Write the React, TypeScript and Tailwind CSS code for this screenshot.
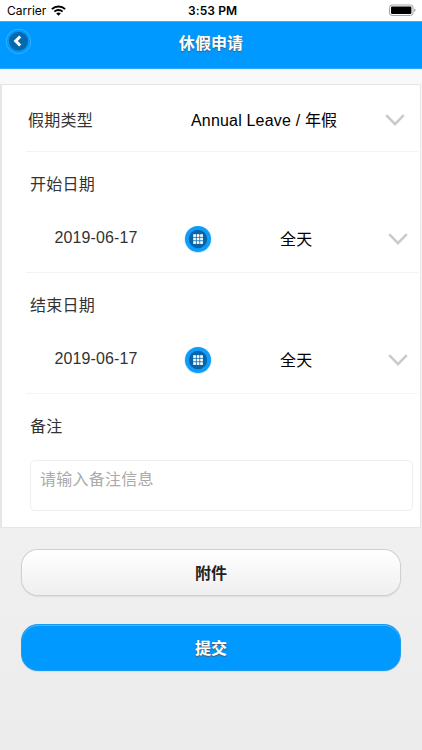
import { type FC } from "react";

interface DateSectionProps {
  label: string;
  date: string;
  period: string;
}

const StatusBar: FC = () => (
  <div className="relative flex h-[21px] items-center justify-between bg-white pr-[5px] pl-[7px] text-black">
    <div className="flex items-center gap-[5px]">
      <span className="font-[Inter,sans-serif] text-[12px] leading-[21px]">
        Carrier
      </span>
      <svg width="15" height="11" viewBox="0 0 15 11" fill="none">
        <path d="M0.9 4.1a9.4 9.4 0 0 1 13.2 0" stroke="#000" strokeWidth="2" />
        <path d="M3.4 6.6a5.9 5.9 0 0 1 8.2 0" stroke="#000" strokeWidth="1.9" />
        <path d="M7.5 10.8 5.2 8.5a3.3 3.3 0 0 1 4.6 0Z" fill="#000" />
      </svg>
    </div>
    <span className="absolute left-[188px] font-[Inter,sans-serif] text-[12px] leading-[21px] font-semibold tracking-[0.1px]">
      3:53 PM
    </span>
    <svg width="29" height="13" viewBox="0 0 29 13">
      <rect x="1.5" y="1" width="23.5" height="10.5" rx="2.5" fill="#fff" stroke="#a3a3a3" />
      <rect x="3" y="2.6" width="20.4" height="7.3" rx="0.8" fill="#000" />
      <path d="M26.3 4.6v3.4c1.6-.4 1.6-3 0-3.4Z" fill="#888" />
    </svg>
  </div>
);

const ChevronDown: FC = () => (
  <svg width="20" height="13" viewBox="0 0 20 13" fill="none">
    <path d="m1.2 1.2 8.8 8.9 8.8-8.9" stroke="#cacacd" strokeWidth="2.6" />
  </svg>
);

const CalendarIcon: FC = () => (
  <svg width="28" height="28" viewBox="0 0 28 28">
    <circle cx="14" cy="14.3" r="13.6" fill="#c3ebfc" />
    <circle cx="14" cy="14" r="13" fill="#109cf8" />
    <circle cx="14" cy="14" r="9.2" fill="#0664a8" />
    {[9.2, 12.7, 16.2].map((y) =>
      [9.2, 12.7, 16.2].map((x) => (
        <rect key={`${x}-${y}`} x={x} y={y} width="2.7" height="2.7" fill="#fff" />
      )),
    )}
  </svg>
);

const DateSection: FC<DateSectionProps> = (props) => {
  const { label, date, period } = props;
  return (
    <div className="mr-[2px] ml-6 h-[121px] border-b border-[#f3f3f3]">
      <div className="h-[66px] pl-1 leading-[66px] tracking-[0.25px] text-[#333]">
        {label}
      </div>
      <div className="flex h-[42px] items-center">
        <span className="w-[130px] pb-[2px] pl-[28.5px] tracking-[0.12px] whitespace-nowrap text-[#333]">
          {date}
        </span>
        <span className="ml-[28px]">
          <CalendarIcon />
        </span>
        <span className="ml-[68px] w-[107.5px] pt-px tracking-[0.25px] text-black">
          {period}
        </span>
        <ChevronDown />
      </div>
    </div>
  );
};

export default function App() {
  return (
    <div className="h-[750px] w-[422px] overflow-hidden bg-linear-to-b from-[#fafafa] to-[#ececec] font-['Liberation_Sans','Noto_Sans_CJK_SC',sans-serif] text-base">
      <StatusBar />
      <header className="relative flex h-12 items-center justify-center border-t border-b border-t-[#38b0fb] border-b-[#2ba8fb] bg-[#0099ff]">
        <button className="absolute top-[5px] left-[5px]">
          <svg width="27" height="28" viewBox="0 0 27 28" fill="none">
            <circle cx="13.5" cy="14.5" r="12.3" stroke="#38b1fb" strokeWidth="1" />
            <circle cx="13.5" cy="14.2" r="9.5" fill="#0668ad" />
            <path d="m15.2 9.5-4.5 4.5 4.5 4.5" stroke="#fff" strokeWidth="3" />
          </svg>
        </button>
        <h1 className="pb-[3px] font-bold tracking-[0.1px] text-white [text-shadow:0_1px_1px_#555]">
          休假申请
        </h1>
      </header>

      <main className="mt-[15px] mr-px h-[444px] border border-l-2 border-[#e6e6e6] bg-white">
        <div className="mr-[2px] ml-6 flex h-[67px] items-center border-b border-[#f3f3f3] pt-[4px]">
          <span className="w-[163px] pt-px pl-[2px] tracking-[0.25px] text-[#333]">
            假期类型
          </span>
          <span className="ml-[2px] w-[194px] pt-px tracking-[0.18px] whitespace-nowrap text-black">
            Annual Leave / 年假
          </span>
          <ChevronDown />
        </div>
        <DateSection label="开始日期" date="2019-06-17" period="全天" />
        <DateSection label="结束日期" date="2019-06-17" period="全天" />
        <div className="pr-[7px] pl-[28px]">
          <div className="h-[66px] leading-[66px] tracking-[0.25px] text-[#333]">备注</div>
          <textarea
            placeholder="请输入备注信息"
            className="block h-[51px] w-full resize-none rounded-[5px] border border-[#eeeeee] px-[9px] py-[7px] leading-6 tracking-[0.25px] placeholder:text-[#aaa]"
          />
        </div>
      </main>

      <div className="flex flex-col gap-[30px] px-[22px] pt-[22px]">
        <button className="h-[45px] rounded-2xl bg-linear-to-b from-white to-[#efefef] pt-[2px] font-bold text-[#222] shadow-[0_0_0_1px_#d0d0d0,0_1px_2px_#bbb]">
          附件
        </button>
        <button className="h-[45px] rounded-2xl bg-[#0099ff] pt-[2px] font-bold text-white shadow-[0_0_0_1px_#1b9df5,0_1px_2px_#bbb,inset_0_1px_0_#45b3ff] [text-shadow:0_1px_1px_#555]">
          提交
        </button>
      </div>
    </div>
  );
}
